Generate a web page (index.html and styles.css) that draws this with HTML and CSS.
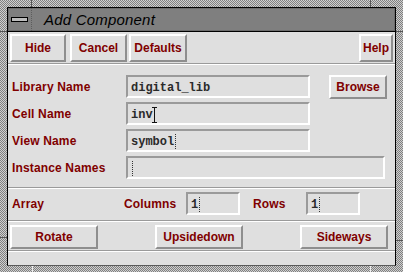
FILE: index.html
```html
<!DOCTYPE html>
<html lang="en">
<head>
    <meta charset="UTF-8">
    <title>Add Component</title>
    <link rel="stylesheet" href="styles.css">
</head>
<body>
    <div class="frame">
        <div class="window">
            <div class="titlebar">
                <div class="menu-btn"><span class="menu-bar"></span></div>
                <div class="title">Add Component</div>
            </div>

            <div class="dialog">
                <div class="toolbar">
                    <button class="btn btn-hide">Hide</button>
                    <button class="btn btn-cancel">Cancel</button>
                    <button class="btn btn-defaults">Defaults</button>
                    <button class="btn btn-help">Help</button>
                </div>
                <div class="sep sep-top"></div>

                <div class="form">
                    <div class="form-row">
                        <label class="label">Library Name</label>
                        <div class="field field-mid">digital_lib</div>
                        <button class="btn btn-browse">Browse</button>
                    </div>
                    <div class="form-row">
                        <label class="label">Cell Name</label>
                        <div class="field field-mid">inv<span class="ibeam"></span></div>
                    </div>
                    <div class="form-row">
                        <label class="label">View Name</label>
                        <div class="field field-mid">symbol<span class="caret"></span></div>
                    </div>
                    <div class="form-row form-row-last">
                        <label class="label">Instance Names</label>
                        <div class="field field-wide"><span class="caret"></span></div>
                    </div>
                </div>
                <div class="sep sep-form"></div>

                <div class="array-row">
                    <span class="label label-array">Array</span>
                    <span class="label label-cols">Columns</span>
                    <div class="field field-small">1<span class="caret"></span></div>
                    <span class="label label-rows">Rows</span>
                    <div class="field field-small">1<span class="caret"></span></div>
                </div>
                <div class="sep sep-array"></div>

                <div class="actions">
                    <button class="btn btn-action">Rotate</button>
                    <button class="btn btn-action">Upsidedown</button>
                    <button class="btn btn-action">Sideways</button>
                </div>
                <div class="sep sep-bottom"></div>
            </div>
        </div>
    </div>
</body>
</html>
```

FILE: styles.css
```css
body {
    margin: 0;
    padding: 0;
    font-family: "Liberation Sans", Arial, sans-serif;
}

/* stippled window-manager border, with the little corner notches */
.frame {
    width: 403px;
    height: 272px;
    box-sizing: border-box;
    padding: 7px 7px 8px 7px;
    background-color: #a8a8a8;
    background-image:
        linear-gradient(#555, #555),
        linear-gradient(#555, #555),
        linear-gradient(#555, #555),
        linear-gradient(#555, #555),
        linear-gradient(#eee, #eee),
        linear-gradient(#eee, #eee),
        linear-gradient(#555, #555),
        linear-gradient(#555, #555),
        repeating-conic-gradient(#cfcfcf 0 25%, #808080 0 50%);
    background-size:
        1px 7px,
        1px 7px,
        7px 1px,
        7px 1px,
        1px 8px,
        1px 8px,
        7px 1px,
        7px 1px,
        2px 2px;
    background-position:
        31px 0,
        370px 0,
        0 31px,
        396px 31px,
        32px 264px,
        370px 264px,
        0 237px,
        396px 240px,
        0 0;
    background-repeat: no-repeat, no-repeat, no-repeat, no-repeat, no-repeat, no-repeat, no-repeat, no-repeat, repeat;
}

.window {
    height: 257px;
    border: 1px solid #000;
    border-bottom-color: #5a5a5a;
    display: flex;
    flex-direction: column;
    background: #dfdfdf;
}

.titlebar {
    height: 23px;
    display: flex;
    align-items: center;
    background: #7f7f7f;
    border-bottom: 1px solid #000;
    box-shadow: inset 0 0 0 1px #6c6c6c;
}

.menu-btn {
    width: 23px;
    height: 23px;
    display: flex;
    align-items: center;
    justify-content: center;
    border-right: 1px dotted #5c5c5c;
}

.menu-bar {
    width: 15px;
    height: 3px;
    background: #bdbdbd;
    border: 1px solid #000;
}

.title {
    margin-left: 12px;
    font-size: 15px;
    font-style: italic;
    color: #000;
    letter-spacing: 0.2px;
}

.dialog {
    flex: 1;
    display: flex;
    flex-direction: column;
}

.btn {
    box-sizing: border-box;
    margin: 0;
    padding: 0;
    font-family: "Liberation Sans", Arial, sans-serif;
    font-size: 12px;
    font-weight: bold;
    color: #800000;
    background: #dfdfdf;
    border: 2px solid;
    border-color: #ffffff #8e8e8e #8e8e8e #ffffff;
    border-radius: 0;
    text-align: center;
}

.toolbar {
    display: flex;
    height: 28px;
    margin-top: 2px;
    padding: 0 2px;
}

.toolbar .btn {
    height: 28px;
}

.btn-hide {
    width: 56px;
}

.btn-cancel {
    width: 57px;
    margin-left: 4px;
}

.btn-defaults {
    width: 58px;
    margin-left: 2px;
}

.btn-help {
    width: 34px;
    margin-left: auto;
    margin-right: 0;
}

.sep {
    height: 0;
    border-top: 1px solid #9a9a9a;
    border-bottom: 1px solid #ffffff;
}

.sep-top {
    margin-top: 1px;
}

.form {
    margin-top: 10px;
    padding-left: 4px;
}

.form-row {
    display: flex;
    align-items: center;
    height: 23px;
    margin-bottom: 4px;
}

.form-row-last {
    margin-top: 2px;
    margin-bottom: 0;
}

.label {
    width: 114px;
    font-size: 12px;
    font-weight: bold;
    color: #800000;
    letter-spacing: 0.15px;
}

.field {
    box-sizing: border-box;
    height: 23px;
    padding: 2px 4px 0 3px;
    border: 2px solid;
    border-color: #9a9a9a #ffffff #ffffff #9a9a9a;
    font-family: "Liberation Mono", "Courier New", monospace;
    font-size: 12px;
    font-weight: bold;
    line-height: 16px;
    color: #2a2a2a;
    display: flex;
    align-items: center;
}

.field-mid {
    width: 184px;
}

.field-wide {
    width: 259px;
}

.field-small {
    width: 54px;
}

.btn-browse {
    width: 58px;
    height: 24px;
    margin-left: 19px;
}

.caret {
    display: inline-block;
    width: 0;
    height: 15px;
    margin-left: 1px;
    border-left: 1px dotted #333;
}

.ibeam {
    display: inline-block;
    width: 5px;
    height: 14px;
    margin-left: -1px;
    border-top: 1px solid #111;
    border-bottom: 1px solid #111;
    background: linear-gradient(#111, #111) center / 1px 100% no-repeat;
}

.sep-form {
    margin-top: 8px;
}

.array-row {
    display: flex;
    align-items: center;
    height: 23px;
    margin-top: 3px;
    padding-left: 4px;
}

.label-array {
    width: 112px;
}

.label-cols {
    width: 62px;
}

.label-rows {
    width: 53px;
    margin-left: 13px;
}

.sep-array {
    margin-top: 5px;
}

.actions {
    display: flex;
    justify-content: space-between;
    height: 24px;
    margin-top: 3px;
    padding: 0 7px 0 2px;
}

.btn-action {
    width: 88px;
    height: 24px;
}

.sep-bottom {
    margin-top: 1px;
}
```
